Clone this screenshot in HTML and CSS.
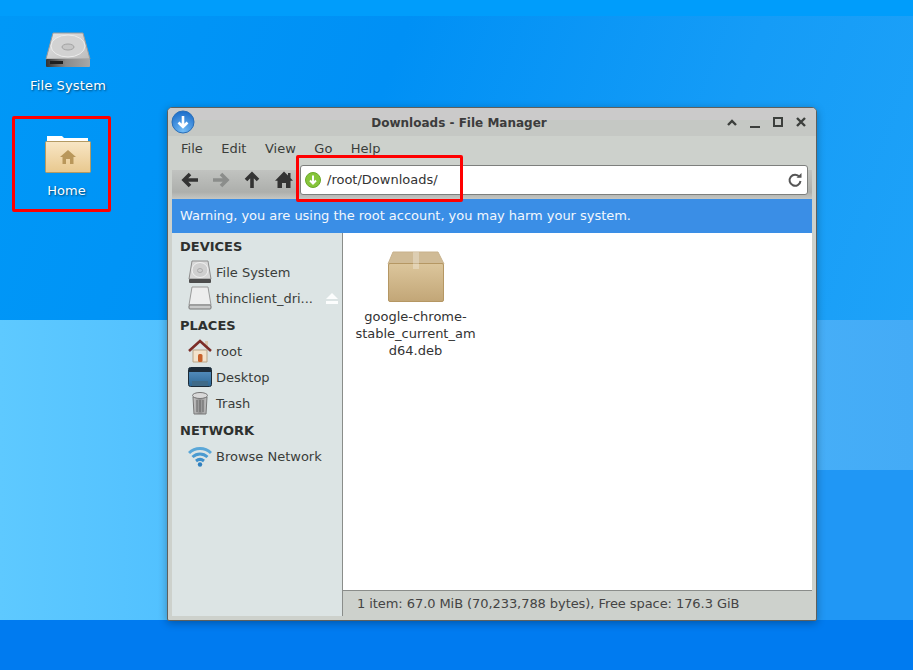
FILE: index.html
```html
<!DOCTYPE html>
<html lang="en">

<head>
    <meta charset="UTF-8">
    <title>Downloads - File Manager</title>
    <link rel="stylesheet" href="styles.css">
</head>

<body>
    <div class="desktop">
        <div class="wallpaper">
            <div class="band band-top"></div>
            <div class="band band-upper"></div>
            <div class="band band-mid"></div>
            <div class="band band-low"></div>
            <div class="band band-foot"></div>
        </div>

        <div class="desk-icon desk-fs">
            <svg width="48" height="38" viewBox="0 0 48 38">
                <defs>
                    <linearGradient id="hddTop" x1="0" y1="0" x2="1" y2="1">
                        <stop offset="0" stop-color="#e6e6e6" />
                        <stop offset="1" stop-color="#bcbcbc" />
                    </linearGradient>
                    <linearGradient id="hddFront" x1="0" y1="0" x2="1" y2="0">
                        <stop offset="0" stop-color="#333" />
                        <stop offset="0.450" stop-color="#8a8a8a" />
                        <stop offset="1" stop-color="#a8a8a8" />
                    </linearGradient>
                </defs>
                <path d="M9 2H39L46 28H2Z" fill="url(#hddTop)" stroke="#9a9a9a" />
                <ellipse cx="24" cy="15" rx="17" ry="11" fill="#d2d2d2" stroke="#ececec" />
                <ellipse cx="24" cy="16" rx="6" ry="3" fill="#c6c6c6" stroke="#a2a2a2" />
                <rect x="2" y="28" width="44" height="8" rx="1" fill="url(#hddFront)" />
                <rect x="6" y="30" width="13" height="3" fill="#1e1e1e" />
            </svg>
            <span>File System</span>
        </div>

        <div class="desk-icon desk-home">
            <svg width="48" height="38" viewBox="0 0 48 38">
                <defs>
                    <linearGradient id="folderBody" x1="0" y1="0" x2="0" y2="1">
                        <stop offset="0" stop-color="#f8e6c5" />
                        <stop offset="1" stop-color="#e8c88e" />
                    </linearGradient>
                </defs>
                <path d="M3 5V1H18L20 3H44V7H3Z" fill="#fff" />
                <rect x="1.500" y="6.500" width="45" height="31" rx="1" fill="url(#folderBody)" stroke="#b49a62" />
                <path d="M24 15L32 22H29.500V29H26V24H22V29H18.500V22H16Z" fill="#b9975a" />
            </svg>
            <span>Home</span>
        </div>

        <div class="window">
            <div class="titlebar">
                <svg class="app-icon" width="24" height="24" viewBox="0 0 24 24">
                    <defs>
                        <radialGradient id="appBlue" cx="0.5" cy="0.9" r="0.9">
                            <stop offset="0" stop-color="#74bcf5" />
                            <stop offset="1" stop-color="#1b6cca" />
                        </radialGradient>
                    </defs>
                    <circle cx="12" cy="12" r="11" fill="url(#appBlue)" stroke="#2a6fb8" />
                    <path d="M12 6V17M7.500 12.500L12 17L16.500 12.500" fill="none" stroke="#fff" stroke-width="2.600" />
                </svg>
                <div class="title">Downloads - File Manager</div>
                <div class="win-buttons">
                    <svg width="14" height="14" viewBox="0 0 14 14"><path d="M3 10L7 6L11 10" fill="none" stroke="#3c3f3c" stroke-width="2.400" /></svg>
                    <svg width="14" height="14" viewBox="0 0 14 14"><rect x="2" y="11" width="10" height="2" fill="#3c3f3c" /></svg>
                    <svg width="14" height="14" viewBox="0 0 14 14"><rect x="3" y="3" width="8" height="8" fill="none" stroke="#3c3f3c" stroke-width="2" /></svg>
                    <svg width="14" height="14" viewBox="0 0 14 14"><path d="M3 3L11 11M11 3L3 11" fill="none" stroke="#3c3f3c" stroke-width="2.400" /></svg>
                </div>
            </div>

            <div class="inner">
                <nav class="menubar">
                    <span>File</span>
                    <span>Edit</span>
                    <span>View</span>
                    <span>Go</span>
                    <span>Help</span>
                </nav>

                <div class="toolbar">
                    <div class="tool-icons">
                        <svg width="18" height="18" viewBox="0 0 18 18"><path d="M17 9H4M9 3L3 9L9 15" fill="none" stroke="#333" stroke-width="3.600" /></svg>
                        <svg width="18" height="18" viewBox="0 0 18 18"><path d="M1 9H14M9 3L15 9L9 15" fill="none" stroke="#8b8d8b" stroke-width="3.600" /></svg>
                        <svg width="18" height="18" viewBox="0 0 18 18"><path d="M9 17V4M3 9L9 3L15 9" fill="none" stroke="#333" stroke-width="3.600" /></svg>
                        <svg width="18" height="18" viewBox="0 0 18 18"><path d="M9 0.500L13 4.500V2H15.500V7L18 9.800H15.500V17H11V12H7V17H2.500V9.800H0Z" fill="#333" /></svg>
                    </div>
                    <div class="address">
                        <svg width="16" height="16" viewBox="0 0 16 16">
                            <circle cx="8" cy="8" r="7.500" fill="#86c53a" stroke="#6aa828" />
                            <path d="M8 3.500V11M5 8.500L8 11.500L11 8.500" fill="none" stroke="#fff" stroke-width="2" />
                        </svg>
                        <span class="path">/root/Downloads/</span>
                        <svg class="reload" width="16" height="16" viewBox="0 0 16 16">
                            <path d="M12.500 5A5.500 5.500 0 1 0 13.500 9" fill="none" stroke="#555" stroke-width="2" />
                            <path d="M9.500 5.800H14.500V1Z" fill="#555" />
                        </svg>
                    </div>
                </div>

                <div class="infobar">Warning, you are using the root account, you may harm your system.</div>

                <div class="panes">
                    <aside class="sidebar">
                        <div class="side-head">DEVICES</div>
                        <div class="side-row">
                            <svg width="24" height="24" viewBox="0 0 24 24">
                                <path d="M4 1H20L23 19H1Z" fill="#d8d8d8" stroke="#8d8d8d" />
                                <ellipse cx="12" cy="10" rx="8" ry="7.500" fill="#cfcfcf" stroke="#f1f1f1" />
                                <ellipse cx="12" cy="10.500" rx="2.500" ry="2" fill="none" stroke="#aaa" />
                                <rect x="1" y="19" width="22" height="4" rx="1" fill="#4d4d4d" />
                            </svg>
                            <span class="side-label">File System</span>
                        </div>
                        <div class="side-row">
                            <svg width="24" height="24" viewBox="0 0 24 24">
                                <path d="M4 1H20L23 19H1Z" fill="#ededed" stroke="#9a9a9a" />
                                <rect x="1" y="19" width="22" height="4" rx="1" fill="#c9c9c9" stroke="#777" />
                            </svg>
                            <span class="side-label">thinclient_dri...</span>
                            <svg class="eject" width="14" height="11" viewBox="0 0 14 11"><path d="M7 0L13 6H1Z" fill="#fcfdfd" /><rect x="1" y="8" width="12" height="3" fill="#fcfdfd" /></svg>
                        </div>
                        <div class="side-head">PLACES</div>
                        <div class="side-row">
                            <svg width="24" height="24" viewBox="0 0 24 24">
                                <path d="M5 11H19V23H5Z" fill="#f3e3cc" stroke="#b9a588" />
                                <rect x="10" y="15" width="4.500" height="8" rx="1.500" fill="#c8622b" />
                                <rect x="17" y="2" width="3" height="6" fill="#d8c9b3" />
                                <path d="M1 12L12 2L23 12" fill="none" stroke="#7c2d28" stroke-width="2.600" />
                            </svg>
                            <span class="side-label">root</span>
                        </div>
                        <div class="side-row">
                            <svg width="24" height="24" viewBox="0 0 24 24">
                                <defs>
                                    <linearGradient id="deskScreen" x1="0" y1="0" x2="0" y2="1">
                                        <stop offset="0" stop-color="#5b94c4" />
                                        <stop offset="1" stop-color="#2d6794" />
                                    </linearGradient>
                                </defs>
                                <rect x="0.500" y="2.500" width="23" height="19" rx="2" fill="url(#deskScreen)" stroke="#1c2b38" />
                                <rect x="1" y="3" width="22" height="4" fill="#1c2b38" />
                                <rect x="4" y="16" width="16" height="5" fill="#3f6a88" />
                            </svg>
                            <span class="side-label">Desktop</span>
                        </div>
                        <div class="side-row">
                            <svg width="24" height="24" viewBox="0 0 24 24">
                                <defs>
                                    <linearGradient id="trashBody" x1="0" y1="0" x2="1" y2="0">
                                        <stop offset="0" stop-color="#c8c8c8" />
                                        <stop offset="0.500" stop-color="#8f8f8f" />
                                        <stop offset="1" stop-color="#c2c2c2" />
                                    </linearGradient>
                                </defs>
                                <path d="M5 6H19L18 23H6Z" fill="url(#trashBody)" stroke="#777" />
                                <ellipse cx="12" cy="4.500" rx="7.500" ry="3" fill="#d9d9d9" stroke="#777" />
                                <path d="M9 9V21M12 9V21M15 9V21" stroke="#666" />
                            </svg>
                            <span class="side-label">Trash</span>
                        </div>
                        <div class="side-head">NETWORK</div>
                        <div class="side-row">
                            <svg width="24" height="24" viewBox="0 0 24 24">
                                <path d="M1 9C7 3 17 3 23 9" fill="none" stroke="#5aa7d8" stroke-width="3" />
                                <path d="M4.500 13C9 9 15 9 19.500 13" fill="none" stroke="#4a9ad0" stroke-width="3" />
                                <path d="M8 17C10.500 15 13.500 15 16 17" fill="none" stroke="#3d8fcb" stroke-width="3" />
                                <circle cx="12" cy="20.500" r="2.200" fill="#2f7fbe" />
                            </svg>
                            <span class="side-label">Browse Network</span>
                        </div>
                    </aside>

                    <div class="content">
                        <div class="files">
                            <div class="file">
                                <svg width="58" height="52" viewBox="0 0 58 52">
                                    <defs>
                                        <linearGradient id="boxFront" x1="0" y1="0" x2="0" y2="1">
                                            <stop offset="0" stop-color="#dcc69c" />
                                            <stop offset="1" stop-color="#c2a677" />
                                        </linearGradient>
                                    </defs>
                                    <path d="M6 1H51L57 13H1Z" fill="#d0bb96" stroke="#c8b28c" />
                                    <rect x="1.500" y="12.500" width="55" height="38" rx="1.500" fill="url(#boxFront)" stroke="#b59763" />
                                    <rect x="26" y="1" width="6" height="17" fill="#fff" fill-opacity="0.280" />
                                </svg>
                                <div class="file-name">google-chrome-<br>stable_current_am<br>d64.deb</div>
                            </div>
                        </div>
                        <div class="statusbar">1 item: 67.0 MiB (70,233,788 bytes), Free space: 176.3 GiB</div>
                    </div>
                </div>
            </div>
        </div>

        <div class="mark mark-home"></div>
        <div class="mark mark-path"></div>
    </div>
</body>

</html>
```

FILE: styles.css
```css
* {
    box-sizing: border-box;
}

body {
    margin: 0;
    font-family: "DejaVu Sans", sans-serif;
    font-size: 13px;
    color: #3a3d3a;
}

.desktop {
    position: relative;
    width: 913px;
    height: 670px;
    overflow: hidden;
}

/* wallpaper */
.wallpaper {
    position: absolute;
    inset: 0;
    display: flex;
    flex-direction: column;
}

.band-top {
    height: 16px;
    background: #009dfb;
}

.band-upper {
    height: 304px;
    background: linear-gradient(110deg, #0098f7 0%, #0090f5 40%, #159cf7 75%, #1ea2f8 100%);
}

.band-mid {
    height: 150px;
    background: linear-gradient(90deg, #5ec9ff 0%, #52c1ff 18%, #44abf6 100%);
}

.band-low {
    height: 150px;
    background: linear-gradient(90deg, #5ec9ff 0%, #52c1ff 18%, #2097f5 90%);
}

.band-foot {
    height: 50px;
    background: #007bf0;
}

/* desktop icons */
.desk-icon {
    position: absolute;
    display: flex;
    flex-direction: column;
    align-items: center;
    width: 100px;
    color: #fff;
    text-shadow: 1px 1px 2px rgba(0, 0, 0, 0.55);
}

.desk-icon span {
    margin-top: 9px;
}

.desk-fs {
    left: 18px;
    top: 31px;
}

.desk-fs span {
    letter-spacing: 0.15px;
}

.desk-home {
    left: 18px;
    top: 135px;
}

.desk-home span {
    margin-top: 10px;
    margin-right: 3px;
}

/* window */
.window {
    position: absolute;
    left: 167px;
    top: 107px;
    width: 650px;
    height: 514px;
    display: flex;
    flex-direction: column;
    background: #cdd1cc;
    border: 1px solid #5e605e;
    border-radius: 5px 5px 2px 2px;
    box-shadow: 0 2px 8px rgba(0, 0, 0, 0.3);
}

.titlebar {
    display: flex;
    align-items: center;
    height: 28px;
    padding: 0 8px 0 3px;
    background: linear-gradient(#cbcaca 0 12px, #c5c8c4 12px);
    border-radius: 4px 4px 0 0;
}

.title {
    flex: 1;
    margin-top: 2px;
    padding-right: 2px;
    text-align: center;
    font-weight: bold;
    font-size: 12px;
    color: #3c3c3c;
}

.win-buttons {
    display: flex;
    gap: 9px;
}

.inner {
    flex: 1;
    display: flex;
    flex-direction: column;
    padding: 0 4px 4px;
    min-height: 0;
}

.menubar {
    display: flex;
    height: 24px;
    align-items: center;
}

.menubar span {
    padding: 0 9.250px;
}

.menubar span:first-child {
    padding-left: 9px;
}

.toolbar {
    display: flex;
    align-items: center;
    height: 39px;
    padding: 1px 4px 0 0;
    background: linear-gradient(#cdd1cc 0 10px, #c1c3c0 10px, #adafac 32px, #c4c6c3 39px);
}

.tool-icons {
    display: flex;
    gap: 13.200px;
    padding-left: 9px;
    width: 128px;
}

.address {
    flex: 1;
    display: flex;
    align-items: center;
    gap: 6px;
    height: 30px;
    padding: 0 4px;
    background: #fff;
    border: 1px solid #7d7f7d;
    border-radius: 3px;
}

.path {
    flex: 1;
    padding-bottom: 2px;
    color: #333;
}

.infobar {
    display: flex;
    align-items: center;
    height: 34px;
    padding: 0 0 2px 8px;
    background: #3a8ee6;
    color: #f2f7fd;
    letter-spacing: -0.03px;
}

.panes {
    flex: 1;
    display: flex;
    min-height: 0;
}

.sidebar {
    width: 171px;
    background: #dce4e4;
    border-right: 1px solid #8a8d8a;
}

.side-head {
    height: 27px;
    line-height: 30px;
    padding-left: 8px;
    font-weight: bold;
    color: #2e302e;
}

.side-head:first-child {
    height: 26px;
    line-height: 28px;
}

.side-row {
    display: flex;
    align-items: center;
    height: 26px;
    padding-left: 16px;
}

.side-label {
    flex: 1;
    margin-left: 4px;
}

.eject {
    margin-right: 3px;
}

.content {
    flex: 1;
    display: flex;
    flex-direction: column;
    background: #fff;
}

.files {
    flex: 1;
    padding-top: 18px;
}

.file {
    width: 145px;
    display: flex;
    flex-direction: column;
    align-items: center;
}

.file-name {
    margin-top: 5px;
    text-align: center;
    line-height: 17px;
    color: #333;
}

.statusbar {
    display: flex;
    align-items: center;
    height: 26px;
    padding-left: 14px;
    background: #cdd1cc;
    border-top: 1px solid #8a8d8a;
    color: #444;
    letter-spacing: -0.07px;
}

/* red annotation boxes */
.mark {
    position: absolute;
    border: 3px solid #f00;
    border-radius: 2px;
}

.mark-home {
    left: 12px;
    top: 116px;
    width: 99px;
    height: 96px;
}

.mark-path {
    left: 296px;
    top: 155px;
    width: 167px;
    height: 47px;
}
```
